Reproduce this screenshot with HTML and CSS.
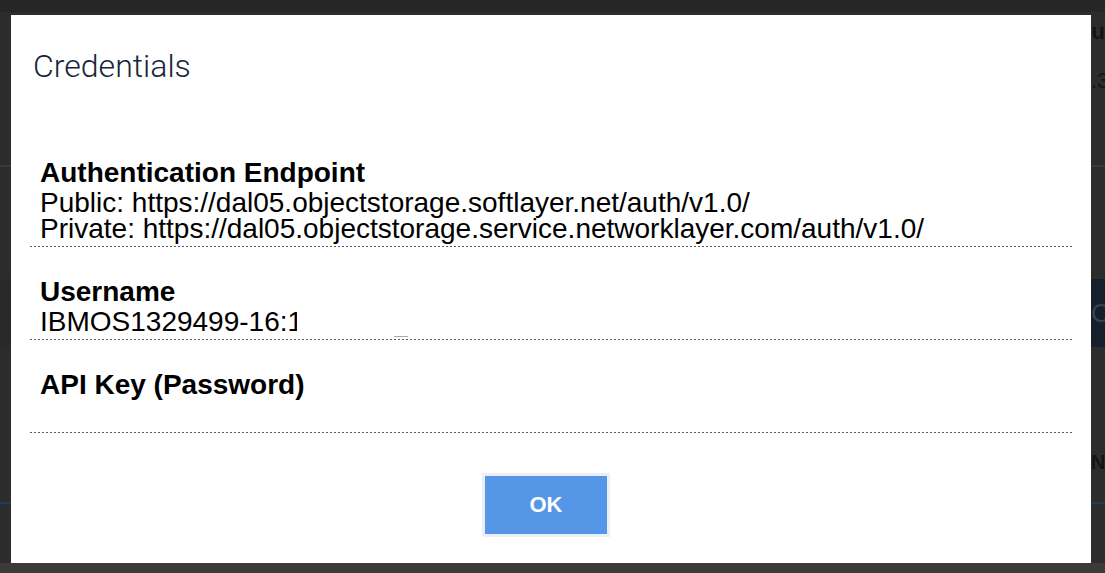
FILE: index.html
```html
<!DOCTYPE html>
<html>
<head>
<meta charset="utf-8">
<link rel="stylesheet" href="styles.css">
<title>Credentials</title>
</head>
<body>
<div class="page">
  <div class="topbar"></div>
  <div class="bg-row bg-row-1"><span class="bg-text">ou</span></div>
  <div class="bg-row bg-row-2"><span class="bg-text">.3</span></div>
  <div class="bg-sep"></div>
  <div class="bg-band">
    <div class="bg-band-left"></div>
    <div class="bg-navy"><span class="bg-text navy-text">C</span></div>
  </div>
  <div class="bg-row bg-row-3"><span class="bg-text">NC</span></div>
  <div class="bg-blue-line"></div>
  <div class="bg-bottom"></div>
</div>

<div class="modal">
  <h1 class="modal-title">Credentials</h1>
  <div class="fields">
    <div class="field field-first">
      <div class="field-label">Authentication Endpoint</div>
      <div class="field-value">Public: https://dal05.objectstorage.softlayer.net/auth/v1.0/</div>
      <div class="field-value">Private: https://dal05.objectstorage.service.networklayer.com/auth/v1.0/</div>
    </div>
    <div class="field">
      <div class="field-label">Username</div>
      <div class="field-value"><span class="clip">IBMOS1329499-16:1</span><span class="mark"></span></div>
    </div>
    <div class="field">
      <div class="field-label">API Key (Password)</div>
      <div class="field-value">&nbsp;</div>
    </div>
  </div>
  <div class="actions">
    <button class="btn-ok">OK</button>
  </div>
</div>
</body>
</html>
```

FILE: styles.css
```css
html, body {
  margin: 0;
  padding: 0;
}
body {
  width: 1105px;
  height: 573px;
  overflow: hidden;
  background: #2c2c2c;
  font-family: "Liberation Sans", Arial, sans-serif;
  position: relative;
}
.page {
  height: 573px;
  display: flex;
  flex-direction: column;
}
.topbar {
  height: 12px;
  background: #262626;
}
.bg-row {
  display: flex;
  justify-content: flex-end;
  align-items: center;
  overflow: hidden;
}
.bg-row-1 { height: 40px; }
.bg-row-2 { height: 58px; }
.bg-text {
  color: #141414;
  font-size: 22px;
  font-weight: bold;
  filter: blur(0.6px);
  display: inline-block;
  width: 14px;
  overflow: hidden;
  white-space: nowrap;
}
.bg-row-1 .bg-text { direction: rtl; }
.bg-row-2 .bg-text { font-weight: normal; }
.bg-sep {
  margin-top: 55px;
  height: 2px;
  background: #3a3a3a;
}
.bg-band {
  margin-top: 112px;
  height: 68px;
  display: flex;
}
.bg-band-left {
  flex: 1;
  background: #292929;
}
.bg-navy {
  width: 14px;
  background: #15202d;
  display: flex;
  align-items: center;
  overflow: hidden;
}
.navy-text { color: #3a4450; font-weight: normal; font-size: 26px; }
.bg-row-3 {
  margin-top: 100px;
  height: 30px;
}
.bg-row-3 .bg-text { font-size: 20px; }
.bg-blue-line {
  margin-top: 25px;
  height: 2px;
  background: #1d3f5f;
}
.bg-bottom {
  margin-top: auto;
  height: 10px;
  background: #3a3a3a;
}

.modal {
  position: absolute;
  left: 11px;
  top: 15px;
  width: 1080px;
  height: 548px;
  background: #ffffff;
  box-sizing: border-box;
  padding: 0 18px 0 19px;
  display: flex;
  flex-direction: column;
}
.modal-title {
  margin: 0;
  padding: 33px 0 0 3px;
  font-family: Roboto, "Liberation Sans", sans-serif;
  font-weight: 300;
  font-size: 32px;
  line-height: 36px;
  color: #15263a;
}
.fields {
  margin-top: 74px;
}
.field {
  padding: 30px 10px 5px 10px;
  background-image: repeating-linear-gradient(to right, #525b66 0 2px, transparent 2px 4px);
  background-size: 100% 1px;
  background-position: left bottom;
  background-repeat: no-repeat;
}
.field-first {
  padding-top: 0;
}
.field-label {
  font-weight: bold;
  font-size: 28px;
  line-height: 30px;
  margin-bottom: 2px;
  color: #000;
}
.field-value {
  font-size: 28px;
  line-height: 26px;
  color: #000;
  white-space: nowrap;
  display: flex;
  align-items: flex-end;
}
.clip {
  display: inline-block;
  width: 257px;
  overflow: hidden;
}
.mark {
  display: inline-block;
  width: 14px;
  height: 1px;
  background: #aaa;
  margin-left: 97px;
  margin-bottom: -2px;
}
.actions {
  margin-top: auto;
  padding-bottom: 26px;
  display: flex;
  justify-content: center;
  padding-right: 11px;
}
.btn-ok {
  width: 128px;
  height: 64px;
  box-sizing: border-box;
  border: 3px solid #eceff5;
  background: #5596e6;
  color: #ffffff;
  font-family: "Liberation Sans", Arial, sans-serif;
  font-weight: bold;
  font-size: 22px;
  padding: 0;
  cursor: pointer;
}
```
